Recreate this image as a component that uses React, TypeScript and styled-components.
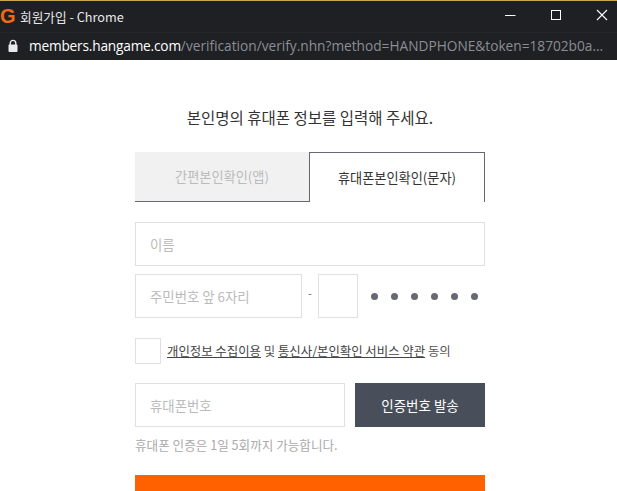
import styled, { createGlobalStyle } from 'styled-components'

const GlobalStyle = createGlobalStyle`
    html, body {
        margin: 0;
        padding: 0;
        background: #fff;
        overflow: hidden;
    }
    body {
        font-family: "Noto Sans CJK KR", "Noto Sans", sans-serif;
    }
`

const App = () => {
    return (
        <Page>
            <GlobalStyle />
            <TitleBar>
                <Logo>G</Logo>
                <WindowTitle>회원가입 - Chrome</WindowTitle>
                <WindowButtons>
                    <WindowButton>
                        <svg width="12" height="12" viewBox="0 0 12 12"><path d="M1 6.5h10.5" stroke="#fff" strokeWidth="1" /></svg>
                    </WindowButton>
                    <WindowButton>
                        <svg width="12" height="12" viewBox="0 0 12 12"><rect x="1.5" y="1.5" width="9" height="9" fill="none" stroke="#fff" strokeWidth="1" /></svg>
                    </WindowButton>
                    <WindowButton>
                        <svg width="12" height="12" viewBox="0 0 12 12"><path d="M1 1l10 10M11 1L1 11" stroke="#fff" strokeWidth="1.1" /></svg>
                    </WindowButton>
                </WindowButtons>
            </TitleBar>
            <AddressBar>
                <svg width="12" height="14" viewBox="0 0 12 14">
                    <path d="M3.2 6V4.2a2.8 2.8 0 0 1 5.6 0V6" fill="none" stroke="#e8eaed" strokeWidth="1.4" />
                    <rect x="1.5" y="5.5" width="9" height="7.5" rx="1" fill="#e8eaed" />
                </svg>
                <Url><b>members.hangame.com</b>/verification/verify.nhn?method=HANDPHONE&amp;token=18702b0a...</Url>
            </AddressBar>
            <Content>
                <Heading>본인명의 휴대폰 정보를 입력해 주세요.</Heading>
                <Tabs>
                    <Tab>간편본인확인(앱)</Tab>
                    <Tab active>휴대폰본인확인(문자)</Tab>
                </Tabs>
                <Field>
                    <Placeholder>이름</Placeholder>
                </Field>
                <IdRow>
                    <IdFront>
                        <Placeholder>주민번호 앞 6자리</Placeholder>
                    </IdFront>
                    <Dash>-</Dash>
                    <IdBack />
                    <Dots>
                        {[0, 1, 2, 3, 4, 5].map(i => <Dot key={i} />)}
                    </Dots>
                </IdRow>
                <AgreeRow>
                    <CheckBox />
                    <AgreeText>
                        <u>개인정보 수집이용</u> 및 <u>통신사/본인확인 서비스 약관</u> 동의
                    </AgreeText>
                </AgreeRow>
                <PhoneRow>
                    <PhoneField>
                        <Placeholder>휴대폰번호</Placeholder>
                    </PhoneField>
                    <SendButton>인증번호 발송</SendButton>
                </PhoneRow>
                <Notice>휴대폰 인증은 1일 5회까지 가능합니다.</Notice>
                <SubmitBar />
            </Content>
        </Page>
    )
}
export default App


const Page = styled.div`
    width: 617px;
    height: 491px;
    overflow: hidden;
    background: #fff;
`
const TitleBar = styled.div`
    display: flex;
    align-items: center;
    box-sizing: border-box;
    height: 32px;
    border-top: 1px solid #c9a94f;
    background: #1e2024;
    color: #fff;
`
const Logo = styled.span`
    width: 16px;
    font-family: "Liberation Sans", sans-serif;
    font-size: 20px;
    font-weight: 700;
    color: #f26a0f;
`
const WindowTitle = styled.span`
    margin-left: 4px;
    font-size: 12.7px;
    color: #e8e8e8;
`
const WindowButtons = styled.div`
    display: flex;
    margin-left: auto;
    margin-right: -8px;
`
const WindowButton = styled.div`
    display: flex;
    align-items: center;
    justify-content: center;
    width: 46px;
    height: 28px;
    margin-bottom: 3px;
`
const AddressBar = styled.div`
    display: flex;
    align-items: center;
    box-sizing: border-box;
    height: 28px;
    padding: 0 0 2px 7px;
    border-top: 1px solid #25272b;
    background: #1e2024;
`
const Url = styled.div`
    margin-left: 10px;
    font-family: "Open Sans", "Noto Sans", sans-serif;
    font-size: 13.7px;
    white-space: nowrap;
    color: #8b8e92;
    b {
        font-weight: 500;
        letter-spacing: -0.2px;
        color: #fff;
    }
`
const Content = styled.div`
    display: flex;
    flex-direction: column;
    width: 350px;
    margin-left: 135px;
    padding-top: 47px;
`
const Heading = styled.h1`
    margin: 0 0 24px;
    font-size: 15.5px;
    font-weight: 400;
    line-height: 21px;
    text-align: center;
    white-space: nowrap;
    color: #333;
`
const Tabs = styled.div`
    display: flex;
    height: 50px;
    margin-bottom: 20px;
`
const Tab = styled.div<{ active?: boolean }>`
    display: flex;
    flex: 1;
    align-items: center;
    justify-content: center;
    box-sizing: border-box;
    font-size: 13.2px;
    color: ${({ active }) => (active ? '#333' : '#bbb')};
    background: ${({ active }) => (active ? '#fff' : '#f1f1f1')};
    border-style: solid;
    border-color: #666872;
    border-width: ${({ active }) => (active ? '1px 1px 0 1px' : '0 0 1px 0')};
`
const Field = styled.div`
    display: flex;
    align-items: center;
    box-sizing: border-box;
    height: 44px;
    padding-left: 14px;
    border: 1px solid #e0e0e0;
`
const Placeholder = styled.span`
    font-size: 13.4px;
    color: #bbb;
`
const IdRow = styled.div`
    display: flex;
    align-items: center;
    margin-top: 8px;
`
const IdFront = styled(Field)`
    width: 167px;
`
const Dash = styled.span`
    width: 16px;
    margin-bottom: 6px;
    font-size: 11px;
    color: #666;
    text-align: center;
`
const IdBack = styled(Field)`
    width: 40px;
    padding: 0;
`
const Dots = styled.div`
    display: flex;
    gap: 13px;
    margin-left: 13px;
`
const Dot = styled.span`
    width: 7px;
    height: 7px;
    border-radius: 50%;
    background: #666872;
`
const AgreeRow = styled.div`
    display: flex;
    align-items: center;
    margin-top: 20px;
`
const CheckBox = styled.div`
    box-sizing: border-box;
    width: 26px;
    height: 26px;
    border: 1px solid #e0e0e0;
`
const AgreeText = styled.span`
    margin-left: 6px;
    font-size: 12.4px;
    white-space: nowrap;
    color: #555;
    u {
        color: #444;
    }
`
const PhoneRow = styled.div`
    display: flex;
    justify-content: space-between;
    margin-top: 19px;
`
const PhoneField = styled(Field)`
    width: 210px;
`
const SendButton = styled.div`
    display: flex;
    align-items: center;
    justify-content: center;
    width: 130px;
    height: 44px;
    font-size: 13.5px;
    color: #fff;
    background: #484e5a;
`
const Notice = styled.p`
    margin: 9px 0 0;
    font-size: 12.6px;
    line-height: 18px;
    color: #aaa;
`
const SubmitBar = styled.div`
    flex: none;
    height: 40px;
    margin-top: 21px;
    background: #ff6000;
`
